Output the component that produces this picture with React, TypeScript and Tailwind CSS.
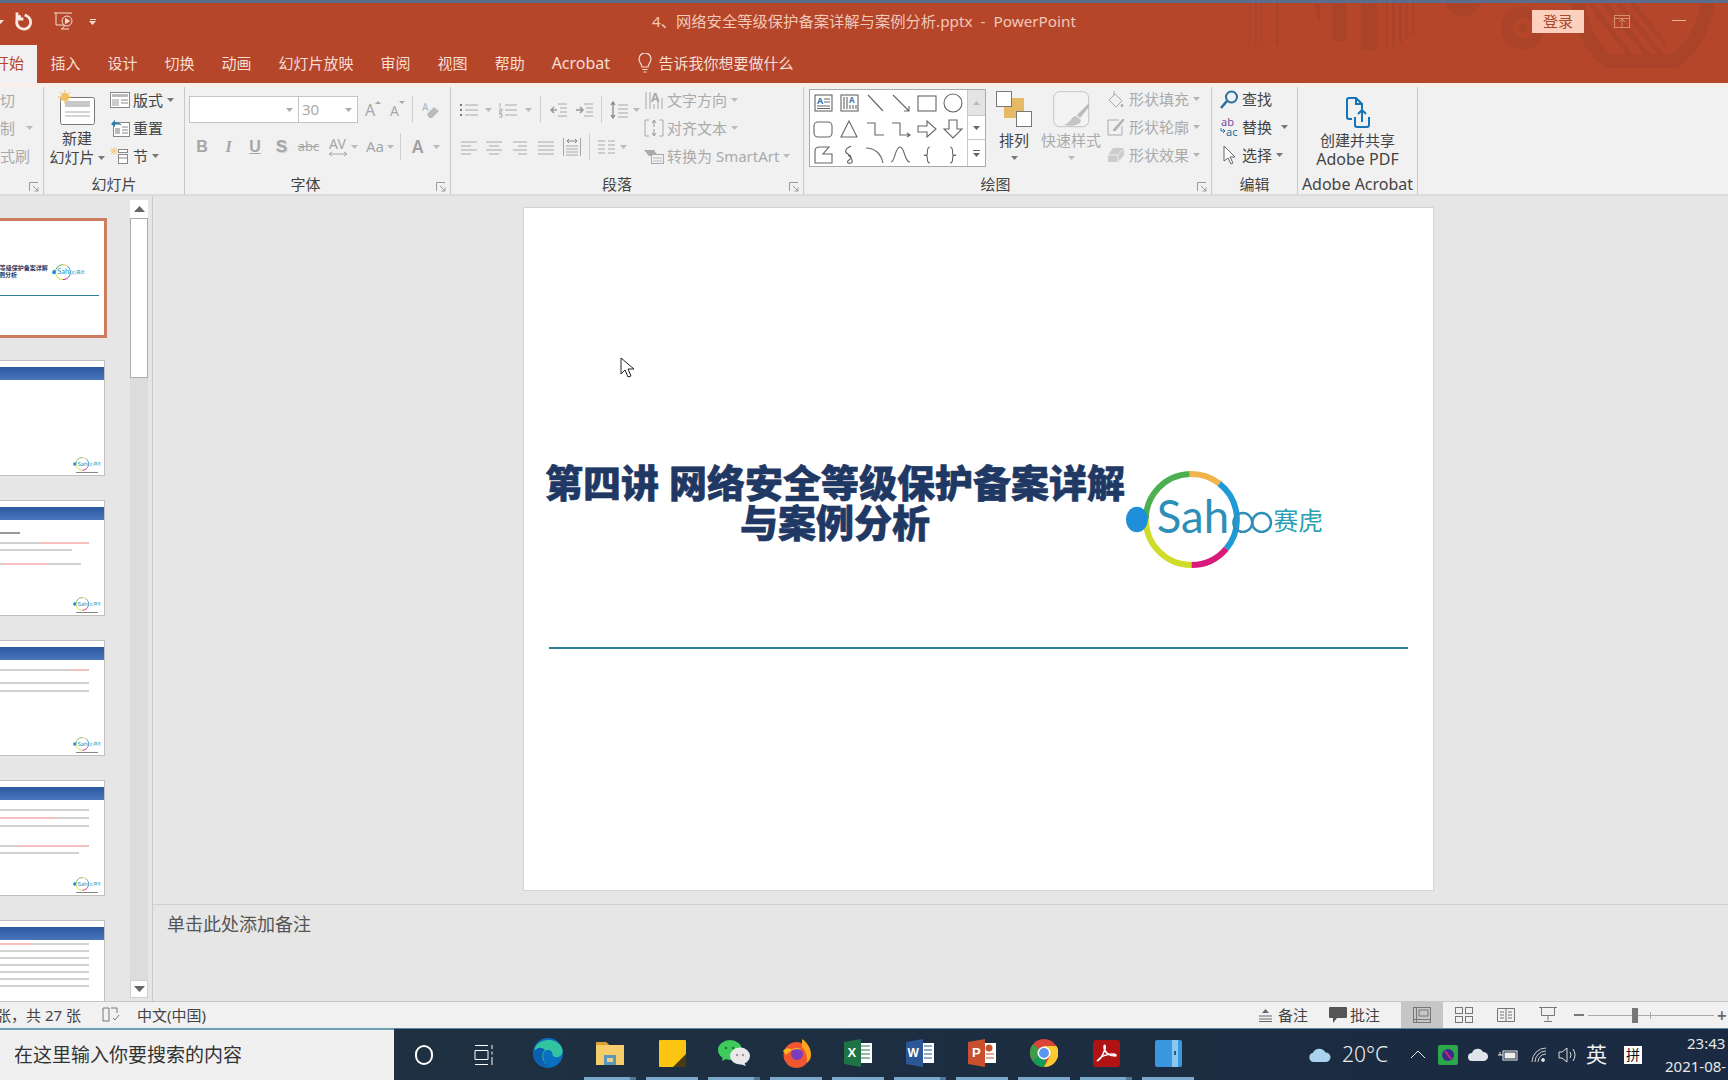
import React from "react";

const G = "#a8a8a8";

function Caret({ color = "#777", className = "" }: { color?: string; className?: string }) {
  return (
    <svg width="7" height="4" viewBox="0 0 7 4" className={"shrink-0 " + className}>
      <path d="M0 0h7L3.5 4z" fill={color} />
    </svg>
  );
}

function Launcher() {
  return (
    <svg width="10" height="10" viewBox="0 0 10 10" className="absolute right-[4px] bottom-[2px]">
      <path d="M.5 9V.5H9M4 4l5 5M9 5.5V9H5.5" fill="none" stroke="#9a9a9a" />
    </svg>
  );
}

function Group({ w, label, labelClass = "", launcher, children }: { w: string; label?: string; labelClass?: string; launcher?: boolean; children: React.ReactNode }) {
  return (
    <div className={"relative shrink-0 flex flex-col border-r border-[#c9c9c9] " + w}>
      <div className="h-[87px]">{children}</div>
      <div className={"h-[20px] leading-[20px] text-center whitespace-nowrap text-[#444] " + labelClass}>{label}</div>
      {launcher && <Launcher />}
    </div>
  );
}

function Sep() {
  return <div className="w-px h-[27px] bg-[#cfcfcf] shrink-0" />;
}

function Shape({ children }: { children: React.ReactNode }) {
  return (
    <svg width="26" height="26" viewBox="0 0 26 26" fill="none" stroke="#666" strokeWidth="1.1">
      {children}
    </svg>
  );
}

const shapes: React.ReactNode[] = [
  <><rect x="5" y="5" width="17" height="16" /><text x="7" y="14" fontSize="9" fontWeight="700" fill="#3b78b5" stroke="none">A</text><path d="M14 9h6M14 12h6M7 16h13M7 18.5h13" /></>,
  <><rect x="5" y="5" width="17" height="16" /><text x="13" y="13" fontSize="8" fontWeight="700" fill="#3b78b5" stroke="none">A</text><path d="M8 7v12M11 7v12M14 15v4M17 15v4M20 15v4" /></>,
  <path d="M6 5l15 16" />,
  <path d="M5 5l16 16M21 16v5h-5" />,
  <rect x="4" y="6" width="18" height="15" />,
  <circle cx="13" cy="13" r="9" />,
  <rect x="4" y="6" width="18" height="15" rx="4" />,
  <path d="M13 5l8 16H5z" />,
  <path d="M5 7h8v12h9" />,
  <path d="M4 7h8v12h9M19 17l3 2-3 2" />,
  <path d="M4 10h9V5l9 8-9 8v-5H4z" />,
  <path d="M9 4h8v9h5l-9 9-9-9h5z" />,
  <path d="M7 21H5V9q0-4 5-4h9l-6 7h9v9z" />,
  <path d="M15 4c-6 3-7 6-3 8s4 4 1 6-1 4 2 3 0-6-3-8" />,
  <path d="M4 6c8 0 15 5 17 15" />,
  <path d="M3 20c4 0 4-15 9-15s4 15 10 15" />,
  <path d="M16 5c-4 0-2 7-3 8s-3 0-3 0 2 0 3 1 -1 7 3 7" />,
  <path d="M10 5c4 0 2 7 3 8s3 0 3 0-2 0-3 1 1 7-3 7" />,
];

function Row({ icon, text, caret, color }: { icon: React.ReactNode; text: string; caret?: string; color?: string }) {
  return (
    <div className="flex items-center h-[28px]" style={color ? { color } : undefined}>
      <span className="w-[22px] shrink-0 flex">{icon}</span>
      <span className="whitespace-nowrap">{text}</span>
      {caret && <span className={"flex " + caret}><Caret color={color ? "#b5b5b5" : "#777"} /></span>}
    </div>
  );
}

function Ribbon() {
  return (
    <div className="h-[113px] bg-[#f1f1f1] flex flex-col shrink-0 border-b-2 border-[#dcdcdc]">
      <div className="h-[4px] bg-[#fbeee9]" />
      <div className="flex">
        <Group w="w-[44px]" launcher>
          <div className="text-[#aaa] -mt-px">
            <div className="h-[28px] flex items-center">切</div>
            <div className="h-[28px] flex items-center">制<Caret color="#bbb" className="ml-[11px]" /></div>
            <div className="h-[28px] flex items-center">式刷</div>
          </div>
        </Group>

        <Group w="w-[141px]" label="幻灯片">
          <div className="flex text-[#444]">
            <div className="w-[63px] pt-[3px] flex flex-col items-center pl-[3px]">
              <svg width="38" height="36" viewBox="0 0 38 36" className="mb-[3px]">
                <rect x="2.5" y="7.5" width="34" height="27" rx="2" fill="#fff" stroke="#777" />
                <rect x="7" y="11" width="25" height="6" fill="#c8c8c8" />
                <path d="M7 22h25M7 26h25" stroke="#aaa" />
                <circle cx="7" cy="7" r="4" fill="#f2bd5c" />
                <path d="M7 0v14M0 7h14M2 2l10 10M12 2L2 12" stroke="#f2bd5c" />
              </svg>
              <div className="leading-[19px] text-center whitespace-nowrap">新建</div>
              <div className="leading-[19px] whitespace-nowrap flex items-center">幻灯片<Caret className="ml-[3px]" /></div>
            </div>
            <div className="ml-[3px] -mt-px">
              <div className="flex items-center h-[28px]">
                <svg width="20" height="16" viewBox="0 0 20 16" className="mr-[3px]"><rect x=".5" y=".5" width="19" height="15" fill="#fff" stroke="#888" /><rect x="2" y="2" width="16" height="3" fill="#bbb" /><rect x="2" y="7" width="7" height="7" fill="#ccc" /><path d="M11 8h7M11 11h7" stroke="#888" /></svg>
                版式<Caret className="ml-[4px]" />
              </div>
              <div className="flex items-center h-[28px]">
                <svg width="20" height="18" viewBox="0 0 20 18" className="mr-[3px]"><rect x="3.5" y="3.5" width="16" height="14" fill="#fff" stroke="#888" /><path d="M12 8h6M12 11h6M12 14h6" stroke="#888" /><rect x="5" y="9" width="5" height="6" fill="#bbb" /><path d="M1 5l4-4v2.5c4 0 6 1 7 3-2-1-4-1-7-.8V8z" fill="#2f7ba5" /></svg>
                重置
              </div>
              <div className="flex items-center h-[28px]">
                <svg width="20" height="18" viewBox="0 0 20 18" className="mr-[3px]"><path d="M4 0v8M0 4h8M1 1l6 6M7 1L1 7" stroke="#f2c77a" /><rect x="8.5" y="2.5" width="9" height="3" fill="#fff" stroke="#888" /><rect x="8.5" y="7.5" width="9" height="9" fill="#fff" stroke="#888" /><path d="M8 11h10" stroke="#888" /></svg>
                节<Caret className="ml-[4px]" />
              </div>
            </div>
          </div>
        </Group>

        <Group w="w-[266px]" label="字体" labelClass="pr-[24px]" launcher>
          <div className="pt-[9px] pl-[4px]">
            <div className="flex items-center h-[27px]">
              <div className="w-[110px] h-full bg-white border border-[#c4c4c4] flex items-center justify-end pr-[5px]"><Caret color="#aaa" /></div>
              <div className="w-[59px] h-full bg-white border border-l-0 border-[#c4c4c4] flex items-center justify-between pl-[3px] pr-[5px] text-[#aaa]">30<Caret color="#aaa" /></div>
              <svg width="18" height="20" viewBox="0 0 18 20" className="ml-[6px]"><text x="1" y="16" fontSize="16" fill={G} stroke="none">A</text><path d="M11 4l3-3 3 3z" fill={G} /></svg>
              <svg width="18" height="20" viewBox="0 0 18 20" className="ml-[7px]"><text x="1" y="16" fontSize="14" fill={G} stroke="none">A</text><path d="M10 1h6l-3 3z" fill={G} /></svg>
              <div className="ml-[5px]"><Sep /></div>
              <svg width="20" height="20" viewBox="0 0 20 20" className="ml-[8px]"><text x="1" y="11" fontSize="10" fill="#9fb5c5" stroke="none">A</text><path d="M6 14l7-7 5 4-7 7H8z" fill="#bbb" /></svg>
            </div>
            <div className="flex items-center h-[27px] mt-[10px] text-[#a6a6a6]">
              <span className="w-[26px] text-center font-bold text-[16px] [font-family:'Liberation_Sans',sans-serif]">B</span>
              <span className="w-[27px] text-center italic font-bold text-[16px] [font-family:'Liberation_Serif',serif]">I</span>
              <span className="w-[26px] text-center font-bold underline text-[16px] [font-family:'Liberation_Sans',sans-serif]">U</span>
              <span className="w-[27px] text-center font-bold text-[17px] [text-shadow:1px_1px_1px_#ccc] [font-family:'Liberation_Sans',sans-serif]">S</span>
              <span className="w-[27px] text-center line-through text-[13px]">abc</span>
              <span className="w-[25px] flex flex-col items-center ml-[3px]">
                <span className="text-[14px] leading-[14px]">AV</span>
                <svg width="18" height="6" viewBox="0 0 18 6"><path d="M0 3h18M3 1L0 3l3 2M15 1l3 2-3 2" fill="none" stroke={G} /></svg>
              </span>
              <Caret color="#bbb" className="ml-[1px]" />
              <span className="ml-[8px] text-[15px]">Aa</span>
              <Caret color="#bbb" className="ml-[3px]" />
              <div className="ml-[6px]"><Sep /></div>
              <span className="ml-[11px] text-[17px] font-semibold text-[#a0a0a0]">A</span>
              <Caret color="#bbb" className="ml-[10px]" />
            </div>
          </div>
        </Group>

        <Group w="w-[353px]" label="段落" labelClass="pr-[20px]" launcher>
          <div className="flex">
            <div className="w-[189px] pt-[9px]">
              <div className="flex items-center h-[27px]">
                <svg width="18" height="18" viewBox="0 0 18 18" className="ml-[9px]"><path d="M5 4h13M5 9h13M5 14h13" stroke={G} /><path d="M0 4h2M0 9h2M0 14h2" stroke="#777" strokeWidth="2" /></svg>
                <Caret color="#bbb" className="ml-[7px]" />
                <svg width="18" height="18" viewBox="0 0 18 18" className="ml-[7px]"><path d="M6 4h12M6 9h12M6 14h12" stroke={G} /><path d="M1 2v4M0 8h3v2H0v2h3M0 13h3v3H0" stroke="#999" fill="none" strokeWidth=".8" /></svg>
                <Caret color="#bbb" className="ml-[8px]" />
                <div className="ml-[8px]"><Sep /></div>
                <svg width="18" height="18" viewBox="0 0 18 18" className="ml-[8px]"><path d="M9 3h9M11 7h7M11 11h7M9 15h9" stroke={G} /><path d="M8 9H3M5 6L2 9l3 3" fill="none" stroke="#999" strokeWidth="1.5" /></svg>
                <svg width="18" height="18" viewBox="0 0 18 18" className="ml-[8px]"><path d="M9 3h9M11 7h7M11 11h7M9 15h9" stroke={G} /><path d="M1 9h6M5 6l3 3-3 3" fill="none" stroke="#999" strokeWidth="1.5" /></svg>
                <div className="ml-[8px]"><Sep /></div>
                <svg width="18" height="18" viewBox="0 0 18 18" className="ml-[8px]"><path d="M8 4h10M8 8h10M8 12h10M8 16h10" stroke={G} /><path d="M3 1v16M1 4l2-3 2 3M1 14l2 3 2-3" fill="none" stroke="#888" strokeWidth="1.3" /></svg>
                <Caret color="#bbb" className="ml-[5px]" />
              </div>
              <div className="flex items-center h-[27px] mt-[10px]">
                <svg width="16" height="18" viewBox="0 0 16 18" className="ml-[10px]"><path d="M0 4h16M0 8h10M0 12h16M0 16h10" stroke={G} /></svg>
                <svg width="16" height="18" viewBox="0 0 16 18" className="ml-[9px]"><path d="M0 4h16M3 8h10M0 12h16M3 16h10" stroke={G} /></svg>
                <svg width="14" height="18" viewBox="0 0 14 18" className="ml-[11px]"><path d="M0 4h14M5 8h9M0 12h14M5 16h9" stroke={G} /></svg>
                <svg width="16" height="18" viewBox="0 0 16 18" className="ml-[11px]"><path d="M0 4h16M0 8h16M0 12h16M0 16h16" stroke={G} /></svg>
                <svg width="18" height="20" viewBox="0 0 18 20" className="ml-[9px]"><path d="M3 9h12M3 12h12M3 15h12M3 18h12M.5 1v18M17.5 1v18" stroke={G} /><path d="M4 4h10M6 2L4 4l2 2M12 2l2 2-2 2" fill="none" stroke="#888" /></svg>
                <div className="ml-[8px]"><Sep /></div>
                <svg width="17" height="18" viewBox="0 0 17 18" className="ml-[8px]"><path d="M0 3h7M10 3h7M0 7h7M10 7h7M0 11h7M10 11h7M0 15h7M10 15h7" stroke={G} /></svg>
                <Caret color="#bbb" className="ml-[5px]" />
              </div>
            </div>
            <div className="ml-[4px] text-[#aaa] -mt-px">
              <div className="flex items-center h-[28px]">
                <svg width="20" height="20" viewBox="0 0 20 20" className="mr-[3px] shrink-0"><path d="M2 2v17M6 2v17M14 8v11M18 8v11M10 14v5" stroke="#a8a8a8" /><text x="7" y="12" fontSize="12" fontWeight="700" fill="#a8a8a8" stroke="none">A</text></svg>
                文字方向<Caret color="#bbb" className="ml-[4px]" />
              </div>
              <div className="flex items-center h-[28px]">
                <svg width="20" height="18" viewBox="0 0 20 18" className="mr-[3px] shrink-0"><path d="M5 1H1v16h4M15 1h4v16h-4" fill="none" stroke="#aaa" /><path d="M10 2v6M8 4l2-3 2 3M10 10v6M8 14l2 3 2-3" fill="none" stroke="#999" /></svg>
                对齐文本<Caret color="#bbb" className="ml-[4px]" />
              </div>
              <div className="flex items-center h-[28px]">
                <svg width="20" height="18" viewBox="0 0 20 18" className="mr-[3px] shrink-0"><path d="M0 3h10l4 6H5z" fill="#aaa" /><rect x="7.5" y="7.5" width="12" height="9" fill="#f1f1f1" stroke="#aaa" /><path d="M9 11h9M9 14h9" stroke="#bbb" /></svg>
                转换为 SmartArt<Caret color="#bbb" className="ml-[4px]" />
              </div>
            </div>
          </div>
        </Group>

        <Group w="w-[408px]" label="绘图" labelClass="pr-[24px]" launcher>
          <div className="flex text-[#444]">
            <div className="ml-[5px] mt-[2px] w-[177px] h-[78px] bg-white border border-[#a9a9a9] flex">
              <div className="w-[157px] grid grid-cols-[repeat(6,26px)] auto-rows-[26px]">
                {shapes.map((s, i) => (
                  <div key={i} className="flex items-center justify-center">
                    <Shape>{s}</Shape>
                  </div>
                ))}
              </div>
              <div className="flex-1 flex flex-col border-l border-[#c8c8c8]">
                <div className="h-[26px] bg-[#e4e4e4] flex items-center justify-center border-b border-[#c8c8c8]"><svg width="7" height="4" viewBox="0 0 7 4"><path d="M0 4h7L3.5 0z" fill="#bbb" /></svg></div>
                <div className="h-[24px] flex items-center justify-center border-b border-[#c8c8c8]"><Caret color="#666" /></div>
                <div className="flex-1 flex flex-col items-center justify-center gap-[2px]"><div className="w-[7px] h-px bg-[#666]" /><Caret color="#666" /></div>
              </div>
            </div>
            <div className="ml-[4px] w-[48px] flex flex-col items-center">
              <svg width="36" height="36" viewBox="0 0 36 36" className="mt-[4px] mb-[4px]">
                <rect x="8" y="7" width="20" height="20" fill="#e5b966" />
                <rect x=".5" y=".5" width="15" height="15" fill="#fff" stroke="#777" />
                <rect x="20.5" y="20.5" width="15" height="15" fill="#fff" stroke="#777" />
              </svg>
              <div className="leading-[19px] whitespace-nowrap">排列</div>
              <Caret className="mt-[6px]" />
            </div>
            <div className="ml-[3px] w-[60px] flex flex-col items-center text-[#aaa]">
              <svg width="37" height="38" viewBox="0 0 37 38" className="mt-[4px] mb-[2px]">
                <rect x=".7" y=".7" width="35" height="35" rx="6" fill="#f3f3f3" stroke="#c4c4c4" />
                <path d="M36 12L24 24l3 3 9-11z" fill="#bbb" />
                <path d="M23 25c-5 0-4 6-12 9 7 2 17 0 17-5z" fill="#c4c4c4" />
              </svg>
              <div className="leading-[19px] whitespace-nowrap">快速样式</div>
              <Caret color="#bbb" className="mt-[6px]" />
            </div>
            <div className="ml-[6px] text-[#aaa] -mt-[2px]">
              <Row color="#aaa" caret="ml-[4px]" text="形状填充" icon={<svg width="18" height="20" viewBox="0 0 18 20" fill="none" stroke="#aaa"><path d="M8 5l7 7-6 6-7-7zM7 6V2" /><path d="M15 15q2 2 0 3-2-1 0-3z" fill="#ccc" /></svg>} />
              <Row color="#aaa" caret="ml-[4px]" text="形状轮廓" icon={<svg width="18" height="18" viewBox="0 0 18 18" fill="none" stroke="#aaa"><path d="M12 2H1v15h14V8" /><path d="M6 12L16 1l1 1L8 13z" fill="#bbb" /></svg>} />
              <Row color="#aaa" caret="ml-[4px]" text="形状效果" icon={<svg width="18" height="18" viewBox="0 0 18 18"><path d="M1 9l5-7h11v7l-6 7H1z" fill="#ccc" /><path d="M1 9h10v7M11 9l6-7" stroke="#eee" fill="none" /></svg>} />
            </div>
          </div>
        </Group>

        <Group w="w-[86px]" label="编辑">
          <div className="pl-[8px] text-[#444] -mt-[2px]">
            <Row text="查找" icon={<svg width="19" height="19" viewBox="0 0 19 19" fill="none" stroke="#2a6f9e" strokeWidth="2"><circle cx="11.5" cy="7" r="5.5" /><path d="M7 11l-6 7" strokeWidth="2.6" /></svg>} />
            <Row text="替换" caret="ml-[9px]" icon={<svg width="20" height="20" viewBox="0 0 20 20"><text x="1" y="9" fontSize="11" fill="#7a4ea0" stroke="none">ab</text><text x="6" y="19" fontSize="11" fill="#2a6f9e" stroke="none">ac</text><path d="M1 11v3h4M3 12l2 2-2 2" fill="none" stroke="#2a6f9e" /></svg>} />
            <Row text="选择" caret="ml-[4px]" icon={<svg width="16" height="20" viewBox="0 0 16 20" className="ml-[2px]"><path d="M2 1v15l4-3 3 6 2-1-3-6h5z" fill="#fff" stroke="#666" /></svg>} />
          </div>
        </Group>

        <Group w="w-[120px]" label="Adobe Acrobat" labelClass="text-[16px]">
          <div className="flex flex-col items-center text-[#444] pt-[10px]">
            <svg width="24" height="32" viewBox="0 0 24 32" fill="none" stroke="#1573b8" strokeWidth="2" className="mb-[2px]">
              <path d="M6 22H3a2 2 0 0 1-2-2V3a2 2 0 0 1 2-2h7l6 6v5M10 1v6h6" />
              <path d="M9 20v8a2 2 0 0 0 2 2h10a2 2 0 0 0 2-2v-8M16 25V13M12 17l4-4 4 4" />
            </svg>
            <div className="leading-[19px] whitespace-nowrap">创建并共享</div>
            <div className="leading-[19px] whitespace-nowrap text-[16px]">Adobe PDF</div>
          </div>
        </Group>
      </div>
    </div>
  );
}

function Header() {
  const tabs = ["插入", "设计", "切换", "动画", "幻灯片放映", "审阅", "视图", "帮助"];
  return (
    <div className="relative h-[80px] bg-[#b5462a] shrink-0 text-[#f6ded4]">
      <svg width="1728" height="80" viewBox="0 0 1728 80" className="absolute inset-0">
        <g fill="#aa4327">
          <path d="M1249 0h2v38h-2zM1255 0h2v42h-2zM1260 0h2v38h-2zM1276 0h3v42h-3zM1313 0l6 20 2-20zM1332 0h15v38h-15zM1361 0h16v48h-16zM1385 0h3v44h-3zM1392 0h3v44h-3zM1399 0h3v40h-3zM1405 0h3v36h-3zM1412 0h3v32h-3z" />
          <path d="M1446 0h34q-3 13-17 13T1446 0z" />
        </g>
        <circle cx="1523" cy="25" r="16" fill="none" stroke="#aa4327" strokeWidth="11" />
        <circle cx="1523" cy="25" r="4" fill="#aa4327" />
        <path d="M1578 0q6 40 30 58h66q28-20 34-58" fill="none" stroke="#aa4327" strokeWidth="14" />
        <path d="M1590 0l40 52M1604 0l44 52M1618 0l44 52M1632 0l34 42" stroke="#aa4327" strokeWidth="5" />
      </svg>
      <div className="relative h-[37px] mb-[3px] flex items-center">
        <Caret color="#f6ded4" className="-ml-[3px]" />
        <svg width="20" height="20" viewBox="0 0 20 20" className="ml-[10px]" fill="none" stroke="#fbe9e1" strokeWidth="2.8"><path d="M12 3.5a7 7 0 1 1-6.5 1M3 2v5h5" strokeLinecap="square" /></svg>
        <svg width="22" height="20" viewBox="0 0 22 20" className="ml-[19px]" fill="none" stroke="#f6ded4"><path d="M1 1h18M3 1v12h8M8 17h8M12 13l-3 4" /><circle cx="14" cy="9" r="5" /><path d="M12.5 6.5l4 2.5-4 2.5z" fill="#f6ded4" /></svg>
        <div className="ml-[14px] flex flex-col items-center gap-[1px]"><div className="w-[6px] h-px bg-[#f6ded4]" /><Caret color="#f6ded4" /></div>
        <div className="absolute inset-0 flex items-center justify-center text-[15.3px] text-[#f2c8b8] whitespace-pre">4、网络安全等级保护备案详解与案例分析.pptx  -  PowerPoint</div>
        <div className="absolute left-[1532px] top-[7px] w-[52px] h-[23px] bg-[#fdd0bd] text-[#a4492f] flex items-center justify-center">登录</div>
        <svg width="16" height="14" viewBox="0 0 16 14" fill="none" stroke="#d98d70" className="absolute left-[1614px] top-[12px]"><rect x=".5" y=".5" width="15" height="12" /><path d="M.5 3.5h15M8 4v8M5 7l3-3 3 3" /></svg>
        <div className="absolute left-[1672px] top-[17px] w-[14px] h-px bg-[#e8b09a]" />
      </div>
      <div className="relative h-[40px] flex items-end">
        <div className="shrink-0 -ml-[19px] px-[13px] h-[38px] bg-[#f1f1f1] text-[#b5462a] flex items-center pb-[2px]">开始</div>
        {tabs.map((t) => (
          <div key={t} className="px-[13.5px] h-[38px] flex items-center whitespace-nowrap pb-[2px]">{t}</div>
        ))}
        <div className="px-[13.5px] h-[38px] flex items-center whitespace-nowrap pb-[2px] text-[16px]">Acrobat</div>
        <div className="pl-[14px] h-[38px] flex items-center whitespace-nowrap pb-[2px]">
          <svg width="14" height="20" viewBox="0 0 14 20" className="mr-[7px]" fill="none" stroke="#f6ded4" strokeWidth="1.2"><path d="M4 14c0-3-3-4-3-8a6 6 0 0 1 12 0c0 4-3 5-3 8zM4.500 16.500h5M5.500 19h3" /></svg>
          告诉我你想要做什么
        </div>
      </div>
    </div>
  );
}

function Logo({ width }: { width: number }) {
  const polar = (deg: number) => {
    const r = ((deg - 90) * Math.PI) / 180;
    return `${67 + 46 * Math.cos(r)} ${50 + 46 * Math.sin(r)}`;
  };
  const arc = (a: number, b: number) => `M${polar(a)}A46 46 0 0 1 ${polar(b)}`;
  return (
    <svg width={width} viewBox="0 0 202 100" className="shrink-0">
      <g fill="none" strokeWidth="6">
        <path d={arc(270, 358)} stroke="#4caf50" />
        <path d={arc(358, 38)} stroke="#f0b44a" />
        <path d={arc(38, 130)} stroke="#1f9ad6" />
        <path d={arc(130, 180)} stroke="#d81b7a" />
        <path d={arc(180, 270)} stroke="#cfdc2a" />
      </g>
      <ellipse cx="12" cy="50" rx="11" ry="13" fill="#1e8fd8" />
      <text x="32" y="64" fontSize="46" fill="#2e8fb8" stroke="none" fontFamily="Lato, sans-serif">Sah</text>
      <circle cx="119" cy="53" r="9.5" fill="none" stroke="#2e8fb8" strokeWidth="2.5" />
      <circle cx="138" cy="53" r="9.5" fill="none" stroke="#2e8fb8" strokeWidth="2.5" />
      <text x="150" y="61" fontSize="25" fill="#2aa0b5" stroke="none" fontFamily="'Noto Sans CJK SC', sans-serif">赛虎</text>
    </svg>
  );
}

type Seg = [number, string];
const gray = "#d2d2d2";
const red = "#f6c0c0";
const thumbs: { top: number; segs: Seg[] }[][] = [
  [],
  [{ top: 12, segs: [[23, "#999"]] }, { top: 8, segs: [[43, gray], [49, red]] }, { top: 5, segs: [[75, gray]] }, { top: 12, segs: [[7, gray], [43, red], [34, gray]] }],
  [{ top: 9, segs: [[72, gray], [20, red]] }, { top: 11, segs: [[92, gray]] }, { top: 6, segs: [[92, gray]] }],
  [{ top: 9, segs: [[92, gray]] }, { top: 6, segs: [[60, red], [32, gray]] }, { top: 6, segs: [[92, gray]] }, { top: 18, segs: [[20, gray], [72, red]] }, { top: 5, segs: [[82, gray]] }],
  [{ top: 3, segs: [[35, red], [57, gray]] }, { top: 5, segs: [[92, gray]] }, { top: 5, segs: [[92, gray]] }, { top: 5, segs: [[92, gray]] }, { top: 5, segs: [[92, gray]] }, { top: 5, segs: [[92, gray]] }, { top: 5, segs: [[92, gray]] }],
];

function SlideThumb({ rows }: { rows: { top: number; segs: Seg[] }[] }) {
  return (
    <div className="self-end shrink-0 w-[155px] h-[116px] mr-[25px] mb-[24px] bg-white border border-[#c0c0c0] flex flex-col">
      <div className="mt-[6px] h-[13px] bg-gradient-to-b from-[#2a5aa0] to-[#4a74bd]" />
      <div className="pl-[46px]">
        {rows.map((r, i) => (
          <div key={i} className="flex h-[2px]" style={{ marginTop: r.top }}>
            {r.segs.map((s, j) => (
              <div key={j} style={{ width: s[0], background: s[1] }} />
            ))}
          </div>
        ))}
      </div>
      <div className="mt-auto self-end mr-[3px] mb-[2px] flex flex-col items-center">
        <Logo width={28} />
        <div className="w-[22px] h-px bg-[#888] mt-[1px]" />
      </div>
    </div>
  );
}

function ThumbPanel() {
  return (
    <div className="w-[130px] shrink-0 overflow-hidden flex flex-col">
      <div className="self-end shrink-0 mt-[22px] mb-[22px] mr-[23px] w-[158px] h-[120px] bg-white border-[3px] border-[#cf7d60] overflow-hidden flex flex-col items-start">
        <div className="flex items-center mt-[43px]">
          <div className="w-[100px] text-center text-[#1f3864] font-bold text-[6px] leading-[7px] whitespace-nowrap">第四讲 网络安全等级保护备案详解<br />与案例分析</div>
          <Logo width={33} />
        </div>
        <div className="mt-[15px] w-[144px] h-px bg-[#2f7f96] ml-[3px]" />
      </div>
      {thumbs.map((t, i) => (
        <SlideThumb key={i} rows={t} />
      ))}
    </div>
  );
}

function ScrollBar() {
  return (
    <div className="w-[18px] shrink-0 bg-[#dcdcdc] flex flex-col mb-[3px] mt-[4px]">
      <div className="h-[18px] bg-white flex items-center justify-center">
        <svg width="11" height="6" viewBox="0 0 11 6"><path d="M0 6h11L5.5 0z" fill="#666" /></svg>
      </div>
      <div className="h-[160px] bg-white border border-[#ababab]" />
      <div className="flex-1" />
      <div className="h-[18px] bg-white border border-[#d0d0d0] flex items-center justify-center">
        <svg width="11" height="6" viewBox="0 0 11 6"><path d="M0 0h11L5.5 6z" fill="#666" /></svg>
      </div>
    </div>
  );
}

function Slide() {
  return (
    <div className="w-[911px] h-[684px] bg-white border border-[#d4d4d4] flex flex-col">
      <div className="flex items-start mt-[254px] ml-[21px]">
        <div className="w-[580px] text-center text-[38px] leading-[40px] font-black text-[#1f3864] whitespace-nowrap [-webkit-text-stroke:0.6px_#1f3864]">
          第四讲 网络安全等级保护备案详解
          <br />
          与案例分析
        </div>
        <div className="mt-[8px]"><Logo width={200} /></div>
      </div>
      <div className="mt-[78px] mx-[25px] h-[2px] bg-[#2f7f96]" />
    </div>
  );
}

function Main() {
  return (
    <div className="relative flex-1 min-h-0 flex bg-[#e6e6e6]">
      <ThumbPanel />
      <ScrollBar />
      <div className="w-[5px] border-r border-[#c9c9c9] shrink-0" />
      <div className="flex-1 flex flex-col min-w-0">
        <div className="h-[708px] shrink-0 pt-[11px] pl-[370px]">
          <Slide />
        </div>
        <div className="flex-1 border-t border-[#cfcfcf] pt-[6px] pl-[14px] text-[18px] leading-[26px] text-[#555]">单击此处添加备注</div>
      </div>
      <svg width="15" height="22" viewBox="0 0 15 22" className="absolute left-[620px] top-[161px]">
        <path d="M1 1v16l4-4 3 7 3-1-3-7h6z" fill="#fff" stroke="#222" />
      </svg>
    </div>
  );
}

function StatusCell({ children }: { children: React.ReactNode }) {
  return <div className="w-[42px] h-full flex items-center justify-center">{children}</div>;
}

function StatusBar() {
  return (
    <div className="h-[27px] shrink-0 bg-[#f1f1f1] border-t border-[#c6c6c6] flex items-center text-[#444]">
      <div className="w-[81px] shrink-0 flex justify-end whitespace-nowrap">张，共 27 张</div>
      <svg width="18" height="16" viewBox="0 0 18 16" fill="none" stroke="#777" className="ml-[21px] shrink-0"><path d="M1 1h6v13H1zM9 1h6v5M11 11l2 2 4-5" /></svg>
      <div className="ml-[17px] whitespace-nowrap">中文(中国)</div>
      <div className="ml-auto w-[469px] shrink-0 h-full flex items-center">
        <svg width="13" height="14" viewBox="0 0 13 14"><path d="M3 5l3.500-4L10 5z" fill="#666" /><path d="M0 8h13M0 11h13M0 13.500h13" stroke="#666" /></svg>
        <span className="ml-[6px]">备注</span>
        <svg width="18" height="16" viewBox="0 0 18 16" className="ml-[21px]"><path d="M1 0h16a1 1 0 0 1 1 1v9a1 1 0 0 1-1 1H8l-4 5v-5H1a1 1 0 0 1-1-1V1a1 1 0 0 1 1-1z" fill="#555" /></svg>
        <span className="ml-[3px]">批注</span>
        <div className="ml-[21px] w-[42px] h-full bg-[#c6c6c6] flex items-center justify-center">
          <svg width="18" height="16" viewBox="0 0 18 16" fill="none" stroke="#777"><rect x=".5" y=".5" width="17" height="15" /><path d="M3.500.5v15M.5 12.500h17" /><rect x="6" y="3" width="9" height="6" /></svg>
        </div>
        <StatusCell><svg width="18" height="16" viewBox="0 0 18 16" fill="none" stroke="#777"><rect x=".5" y=".5" width="7" height="6" /><rect x="10.500" y=".5" width="7" height="6" /><rect x=".5" y="9.500" width="7" height="6" /><rect x="10.500" y="9.500" width="7" height="6" /></svg></StatusCell>
        <StatusCell><svg width="18" height="16" viewBox="0 0 18 16" fill="none" stroke="#777"><path d="M.5 1.500h17v13H.5zM9 1.500v13M3 5h4M3 8h4M3 11h4M11 5h4M11 8h4M11 11h4" /></svg></StatusCell>
        <StatusCell><svg width="18" height="16" viewBox="0 0 18 16" fill="none" stroke="#777"><path d="M0 .5h18M2.500.5v8h13v-8M9 8.500v5M5 14.500h8" /></svg></StatusCell>
        <div className="ml-[5px] w-[10px] h-[2px] bg-[#777] shrink-0" />
        <div className="ml-[4px] w-[126px] h-px bg-[#aaa] relative shrink-0">
          <div className="absolute left-[44px] -top-[7px] w-[6px] h-[15px] bg-[#777]" />
          <div className="absolute left-[62px] -top-[3px] w-px h-[7px] bg-[#aaa]" />
        </div>
        <span className="ml-[3px] text-[#666] font-semibold text-[17px] leading-none">+</span>
      </div>
    </div>
  );
}

function TaskCell({ children, open, multi }: { children: React.ReactNode; open?: boolean; multi?: boolean }) {
  return (
    <div className="w-[62px] shrink-0 h-full flex flex-col">
      <div className="flex-1 flex items-center justify-center">{children}</div>
      <div className={"h-[3px] mx-[5px] flex justify-end " + (open ? "bg-[#7ba9cc]" : "")}>
        {multi && <div className="w-[6px] bg-[#4f7797]" />}
      </div>
    </div>
  );
}

function Taskbar() {
  return (
    <div className="h-[52px] shrink-0 flex bg-gradient-to-r from-[#1f3240] to-[#1a2a42] border-t border-[#5b8aa5] text-white">
      <div className="w-[394px] shrink-0 bg-[#f0f0f0] border-t-2 border-[#6e9fb3] flex items-center pl-[14px] text-[19px] text-[#333] -mt-px">在这里输入你要搜索的内容</div>
      <div className="w-[60px] shrink-0 flex items-center justify-center">
        <div className="w-[18px] h-[20px] rounded-full border-2 border-white" />
      </div>
      <div className="w-[60px] shrink-0 flex items-center justify-center">
        <svg width="20" height="22" viewBox="0 0 20 22" fill="none" stroke="#fff"><path d="M1 1.500h13M1 20.500h13M1 6.500h13v9H1zM18 1v4M18 7.500v3M18 13v8" /></svg>
      </div>
      <div className="w-[3px] shrink-0" />
      <TaskCell>
        <svg width="32" height="32" viewBox="0 0 32 32"><circle cx="16" cy="16" r="15" fill="#0b6fbf" /><path d="M3 11C6 2 24-1 30 11c2 6-2 10-7 9-4-1-1-6-6-7-7-1-8 9-2 15-7-1-13-9-12-17z" fill="#32c4a0" /><path d="M13 13c-5 4-3 14 5 16-9 2-17-6-16-14 2-4 7-6 11-2z" fill="#0a5fb0" /></svg>
      </TaskCell>
      <TaskCell open multi>
        <svg width="28" height="28" viewBox="0 0 28 28"><path d="M0 3h10l3 3h15v20H0z" fill="#f5cd6b" /><path d="M0 3h10l3 3H0z" fill="#d99f2f" /><rect x="8" y="16" width="12" height="10" fill="#5a97b8" /><rect x="11" y="19" width="6" height="4" fill="#e8d08a" /></svg>
      </TaskCell>
      <TaskCell open>
        <svg width="27" height="27" viewBox="0 0 27 27"><rect width="27" height="27" rx="1" fill="#fbc512" /><path d="M27 14v13H14z" fill="#4a3a14" /></svg>
      </TaskCell>
      <TaskCell open multi>
        <svg width="32" height="26" viewBox="0 0 32 26"><ellipse cx="12" cy="10" rx="12" ry="10" fill="#3dcb5c" /><path d="M5 16l-1 5 6-3z" fill="#3dcb5c" /><circle cx="8" cy="8" r="1.300" fill="#1e7a35" /><circle cx="15" cy="8" r="1.300" fill="#1e7a35" /><ellipse cx="22" cy="16" rx="10" ry="8.500" fill="#e9e9e9" /><path d="M26 22l2 4-6-2z" fill="#e9e9e9" /><circle cx="19" cy="15" r="1.200" fill="#999" /><circle cx="25" cy="15" r="1.200" fill="#999" /></svg>
      </TaskCell>
      <TaskCell open>
        <svg width="29" height="29" viewBox="0 0 29 29"><circle cx="14.500" cy="16" r="13" fill="#f0562f" /><path d="M20 0c6 4 9 10 9 16 0 4-2 6-4 8 1-8-3-14-5-16z" fill="#fba51f" /><path d="M1 12c3-4 7-3 9-1l-6 5z" fill="#fcb423" /><circle cx="15" cy="15" r="6" fill="#7a3cc0" /><path d="M9 12c2-4 8-4 11-1-3-1-8-1-11 1z" fill="#fba51f" /></svg>
      </TaskCell>
      <TaskCell open>
        <svg width="28" height="28" viewBox="0 0 28 28"><rect x="12" y="4" width="16" height="20" fill="#fff" /><path d="M16 7h10M16 11h10M16 15h10M16 19h10" stroke="#2a7a4a" /><path d="M0 3l17-3v28L0 25z" fill="#1f7246" /><text x="3.500" y="18" fontSize="13" fontWeight="700" fill="#fff" stroke="none" fontFamily="Liberation Sans, sans-serif">X</text></svg>
      </TaskCell>
      <TaskCell open multi>
        <svg width="28" height="28" viewBox="0 0 28 28"><rect x="12" y="4" width="16" height="20" fill="#fff" /><path d="M18 7h8M18 11h8M18 15h8M18 19h8" stroke="#2b5797" /><path d="M0 3l17-3v28L0 25z" fill="#2b5797" /><text x="1.500" y="18" fontSize="12" fontWeight="700" fill="#fff" stroke="none" fontFamily="Liberation Sans, sans-serif">W</text></svg>
      </TaskCell>
      <TaskCell open>
        <svg width="28" height="28" viewBox="0 0 28 28"><rect x="12" y="4" width="16" height="20" fill="#fff" /><path d="M18 15h8M18 19h8" stroke="#c8502e" /><circle cx="21" cy="9" r="3.500" fill="#c8502e" /><path d="M0 3l17-3v28L0 25z" fill="#c8502e" /><text x="4" y="18" fontSize="13" fontWeight="700" fill="#fff" stroke="none" fontFamily="Liberation Sans, sans-serif">P</text></svg>
      </TaskCell>
      <TaskCell open>
        <svg width="28" height="28" viewBox="0 0 28 28"><circle cx="14" cy="14" r="14" fill="#db4437" /><path d="M14 14L2 21a14 14 0 0 0 12 7 14 14 0 0 0 3-.3z" fill="#0f9d58" /><path d="M2 21A14 14 0 0 1 3 5l11 9z" fill="#3f9c4a" /><path d="M14 7h12.500A14 14 0 0 1 14 28l6-11z" fill="#fcc934" /><circle cx="14" cy="14" r="6.500" fill="#fff" /><circle cx="14" cy="14" r="5" fill="#5a95f0" /></svg>
      </TaskCell>
      <TaskCell open multi>
        <svg width="27" height="27" viewBox="0 0 27 27"><rect width="27" height="27" rx="3" fill="#b01313" /><path d="M4 21c3-1 6-6 8-12 1-4-1-5-1-2 0 5 5 9 11 9 2 0 1-2-2-2-5 0-12 2-14 5-1 1-2 2-2 2z" fill="none" stroke="#fff" strokeWidth="1.500" /></svg>
      </TaskCell>
      <TaskCell open>
        <svg width="27" height="27" viewBox="0 0 27 27"><rect width="27" height="27" rx="2" fill="#3a97dd" /><rect x="17" y="0" width="6" height="27" fill="#8cc7ee" /><rect x="19" y="11" width="2" height="4" fill="#1f5f8f" /></svg>
      </TaskCell>
      <div className="ml-auto w-[419px] shrink-0 h-full flex items-center">
        <svg width="28" height="19" viewBox="0 0 28 19"><path d="M6 19a6 6 0 0 1-1-11.800A9 9 0 0 1 21 7a6 6 0 0 1 1 12z" fill="#a9d3ec" /></svg>
        <span className="ml-[11px] text-[21px] font-light text-[#eee] whitespace-nowrap">20°C</span>
        <svg width="16" height="9" viewBox="0 0 16 9" fill="none" stroke="#eee" className="ml-[22px] shrink-0"><path d="M1 8l7-7 7 7" /></svg>
        <svg width="20" height="20" viewBox="0 0 20 20" className="ml-[12px] shrink-0"><rect width="20" height="20" rx="2" fill="#2ba84a" /><circle cx="10" cy="10" r="6" fill="#3a2a8c" /><path d="M7 6l6 8" stroke="#d6246e" strokeWidth="2" /></svg>
        <svg width="20" height="13" viewBox="0 0 20 13" className="ml-[10px] shrink-0"><path d="M4 13a4 4 0 0 1 0-8 6 6 0 0 1 11-1 4.500 4.500 0 0 1 1 9z" fill="#dfe3ea" /></svg>
        <svg width="20" height="13" viewBox="0 0 20 13" className="ml-[10px] shrink-0" fill="none" stroke="#eee"><rect x="5" y="3" width="14" height="9" /><rect x="7" y="5" width="10" height="5" fill="#eee" /><path d="M0 7h5M2 4v3" /></svg>
        <svg width="16" height="16" viewBox="0 0 16 16" className="ml-[13px] shrink-0" fill="none" stroke="#ccc"><path d="M1 15A14 14 0 0 1 15 1M4 15A11 11 0 0 1 15 4M7 15a8 8 0 0 1 8-8" /><circle cx="12" cy="13" r="1.500" fill="#eee" /></svg>
        <svg width="20" height="18" viewBox="0 0 20 18" className="ml-[11px] shrink-0" fill="none" stroke="#ddd"><path d="M1 6h3l5-4v14l-5-4H1zM12 6q2 3 0 6M15 3q4 6 0 12" /></svg>
        <span className="ml-[8px] text-[21px] text-[#f2f2f2] leading-none">英</span>
        <span className="ml-[17px] w-[18px] h-[18px] bg-white text-[#111] text-[14px] leading-[18px] text-center shrink-0">拼</span>
        <div className="ml-[23px] w-[63px] shrink-0 overflow-hidden text-[15px] leading-[23px] text-[#e8e8e8] whitespace-nowrap">
          <div className="pl-[22px]">23:43</div>
          <div>2021-08-</div>
        </div>
      </div>
    </div>
  );
}

export default function App() {
  return (
    <div className="w-[1728px] h-[1080px] overflow-hidden flex flex-col text-[15px] text-[#444] [font-family:'Noto_Sans','Noto_Sans_CJK_SC',sans-serif]">
      <div className="h-[3px] bg-[#5c6c8c] shrink-0" />
      <Header />
      <Ribbon />
      <Main />
      <StatusBar />
      <Taskbar />
    </div>
  );
}
